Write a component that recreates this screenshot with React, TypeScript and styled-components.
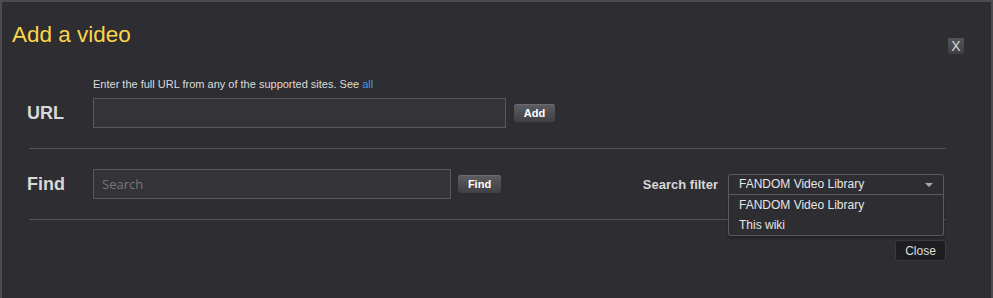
import React from "react";
import styled, { createGlobalStyle } from "styled-components";

const GlobalStyle = createGlobalStyle`
  html, body {
    margin: 0;
    padding: 0;
    background: #2e2d31;
  }
  body {
    font-family: "Liberation Sans", Arial, Helvetica, sans-serif;
  }
`;

/* ---------------------------------------- */
/* Modal frame */
/* ---------------------------------------- */
const ModalStyled = styled.div`
  box-sizing: border-box;
  width: 993px;
  height: 298px;
  background: #2e2d31;
  border: 2px solid #4c4b4f;
  border-bottom: none;
  overflow: hidden;
`;

const HeaderStyled = styled.header`
  display: flex;
  justify-content: space-between;
  align-items: flex-start;
  padding: 20px 27px 0 10px;
`;

const TitleStyled = styled.h1`
  margin: 0;
  font-size: 22.5px;
  line-height: 26px;
  font-weight: normal;
  color: #fbd54a;
`;

const CloseXStyled = styled.button`
  box-sizing: border-box;
  margin-top: 16px;
  width: 16px;
  height: 16px;
  padding: 0;
  border: none;
  border-radius: 1px;
  background: linear-gradient(#555458, #403f43);
  color: #d8d8d8;
  font-family: "Liberation Sans", Arial, sans-serif;
  font-size: 14px;
  line-height: 16px;
  text-align: center;
`;

const BodyStyled = styled.div`
  padding: 0 45px 0 25px;
`;

/* ---------------------------------------- */
/* Rows */
/* ---------------------------------------- */
const UrlSectionStyled = styled.section`
  display: grid;
  grid-template-columns: 66px auto;
  row-gap: 7px;
  margin-top: 23px;
`;

const HelpTextStyled = styled.p`
  grid-column: 2;
  margin: 0;
  font-size: 11px;
  line-height: 14px;
  color: #dcdcdc;
  a {
    color: #3d9de6;
    text-decoration: none;
  }
`;

const RowStyled = styled.div<{ gap?: number }>`
  display: flex;
  align-items: center;
  gap: ${(props) => props.gap ?? 8}px;
`;

const LabelStyled = styled.label`
  display: flex;
  align-items: center;
  font-size: 18px;
  font-weight: bold;
  color: #d8d8d8;
`;

const FindSectionStyled = styled.section`
  display: grid;
  grid-template-columns: 66px auto 1fr;
  align-items: center;
  padding: 20px 0;
  position: relative;
  z-index: 2;
`;

const TextInputStyled = styled.input<{ w: number }>`
  box-sizing: border-box;
  width: ${(props) => props.w}px;
  height: 30px;
  margin: 0;
  padding: 0 8px;
  background: #343337;
  border: 1px solid #59585c;
  border-radius: 0;
  color: #ddd;
  font-family: "Open Sans", "Liberation Sans", sans-serif;
  font-size: 13px;
  outline: none;
  &::placeholder {
    color: #77767a;
  }
`;

const SmallButtonStyled = styled.button<{ w: number }>`
  box-sizing: border-box;
  width: ${(props) => props.w}px;
  height: 18px;
  padding: 0;
  border: none;
  border-radius: 3px;
  background: linear-gradient(#5e5d61, #403f43);
  box-shadow: inset 0 1px 0 #6c6b6f;
  color: #fff;
  font-family: "Liberation Sans", Arial, sans-serif;
  font-size: 11px;
  font-weight: bold;
  line-height: 18px;
`;

const DividerStyled = styled.hr<{ top?: number }>`
  margin: ${(props) => props.top ?? 0}px 0 0 2px;
  height: 1px;
  border: none;
  background: #525155;
`;

/* ---------------------------------------- */
/* Search filter */
/* ---------------------------------------- */
const FilterStyled = styled.div`
  display: flex;
  align-items: center;
  justify-content: flex-end;
  gap: 10px;
  padding-right: 2px;
`;

const FilterLabelStyled = styled.span`
  font-size: 13px;
  font-weight: bold;
  color: #d8d8d8;
`;

const SelectWrapStyled = styled.div`
  position: relative;
  width: 216px;
`;

const SelectBoxStyled = styled.div`
  box-sizing: border-box;
  height: 21px;
  padding: 0 10px;
  display: flex;
  align-items: center;
  justify-content: space-between;
  border: 1px solid #5c5b5f;
  border-radius: 3px 3px 0 0;
  background: #2e2d31;
  font-size: 12px;
  color: #e6e6e6;
`;

const CaretStyled = styled.span`
  width: 0;
  height: 0;
  margin-top: 2px;
  border-left: 4px solid transparent;
  border-right: 4px solid transparent;
  border-top: 4px solid #a9a9ad;
`;

const MenuStyled = styled.ul`
  position: absolute;
  top: 21px;
  left: 0;
  right: 0;
  box-sizing: border-box;
  margin: 0;
  padding: 0;
  list-style: none;
  background: #2e2d31;
  border: 1px solid #5c5b5f;
  border-top: none;
  border-radius: 0 0 3px 3px;
  box-shadow: 0 2px 3px rgba(0, 0, 0, 0.3);
`;

const MenuItemStyled = styled.li`
  height: 20px;
  line-height: 20px;
  padding-left: 10px;
  font-size: 12px;
  color: #e6e6e6;
`;

/* ---------------------------------------- */
/* Footer */
/* ---------------------------------------- */
const FooterStyled = styled.footer`
  display: flex;
  justify-content: flex-end;
  padding: 20px 0 0 0;
`;

const CloseButtonStyled = styled.button`
  box-sizing: border-box;
  width: 51px;
  height: 21px;
  padding: 0;
  background: #1e1e20;
  border: 1px solid #3b3a3e;
  border-radius: 3px;
  color: #dedede;
  font-family: "Liberation Sans", Arial, sans-serif;
  font-size: 12px;
`;

export default function App() {
  return (
    <>
      <GlobalStyle />
      <ModalStyled>
        <HeaderStyled>
          <TitleStyled>Add a video</TitleStyled>
          <CloseXStyled aria-label="close">X</CloseXStyled>
        </HeaderStyled>
        <BodyStyled>
          <UrlSectionStyled>
            <HelpTextStyled>
              Enter the full URL from any of the supported sites. See{" "}
              <a href="#all">all</a>
            </HelpTextStyled>
            <LabelStyled>URL</LabelStyled>
            <RowStyled gap={8}>
              <TextInputStyled w={413} />
              <SmallButtonStyled w={41}>Add</SmallButtonStyled>
            </RowStyled>
          </UrlSectionStyled>
          <DividerStyled top={20} />
          <FindSectionStyled>
            <LabelStyled>Find</LabelStyled>
            <RowStyled gap={7}>
              <TextInputStyled w={358} placeholder="Search" />
              <SmallButtonStyled w={43}>Find</SmallButtonStyled>
            </RowStyled>
            <FilterStyled>
              <FilterLabelStyled>Search filter</FilterLabelStyled>
              <SelectWrapStyled>
                <SelectBoxStyled>
                  FANDOM Video Library
                  <CaretStyled />
                </SelectBoxStyled>
                <MenuStyled>
                  <MenuItemStyled>FANDOM Video Library</MenuItemStyled>
                  <MenuItemStyled>This wiki</MenuItemStyled>
                </MenuStyled>
              </SelectWrapStyled>
            </FilterStyled>
          </FindSectionStyled>
          <DividerStyled />
          <FooterStyled>
            <CloseButtonStyled>Close</CloseButtonStyled>
          </FooterStyled>
        </BodyStyled>
      </ModalStyled>
    </>
  );
}
